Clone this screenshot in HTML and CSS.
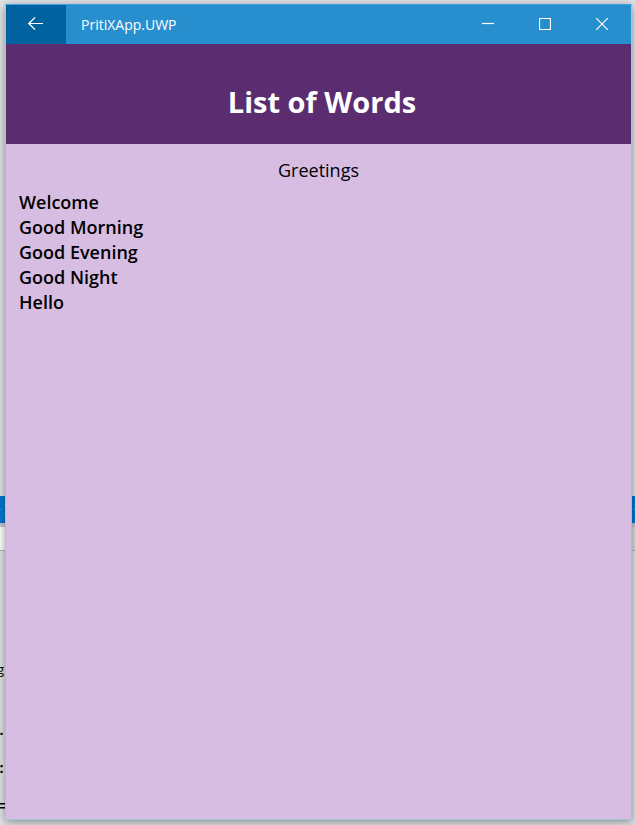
FILE: index.html
```html
<!DOCTYPE html>
<html lang="en">
<head>
<meta charset="utf-8">
<meta name="viewport" content="width=device-width, initial-scale=1">
<title>PritiXApp.UWP</title>
<link rel="stylesheet" href="styles.css">
</head>
<body>
<div class="desktop">
  <div class="backdrop" aria-hidden="true">
    <div class="strip"><span>⁘</span><span>⁘</span></div>
    <div class="toolbar"></div>
    <div class="editor">
      <span class="line line-label">g</span>
      <span class="line">.</span>
      <span class="line">:</span>
      <span class="line">=</span>
    </div>
  </div>
  <div class="window">
    <header class="titlebar">
      <button class="back" type="button" aria-label="Back">
        <svg width="16" height="14" viewBox="0 0 16 14"><path d="M7 .5 .7 6.500 7 12.500M.7 6.500H15"/></svg>
      </button>
      <span class="app-name">PritiXApp.UWP</span>
      <div class="controls">
        <button class="control" type="button" aria-label="Minimize">
          <svg width="12" height="12" viewBox="0 0 12 12"><path d="M0 5.500h12"/></svg>
        </button>
        <button class="control" type="button" aria-label="Maximize">
          <svg width="12" height="12" viewBox="0 0 12 12"><path d="M.5 .5h11v11H.5z"/></svg>
        </button>
        <button class="control" type="button" aria-label="Close">
          <svg width="12" height="12" viewBox="0 0 12 12"><path d="m0 0 12 12M12 0 0 12"/></svg>
        </button>
      </div>
    </header>
    <h1 class="page-title">List of Words</h1>
    <main class="content">
      <h2 class="group">Greetings</h2>
      <ul class="words">
        <li>Welcome</li>
        <li>Good Morning</li>
        <li>Good Evening</li>
        <li>Good Night</li>
        <li>Hello</li>
      </ul>
    </main>
  </div>
</div>
</body>
</html>
```

FILE: styles.css
```css
* {
  box-sizing: border-box;
}

body {
  margin: 0;
  font-family: "Open Sans", "Noto Sans", sans-serif;
  color: #000;
}

.desktop {
  display: grid;
  min-height: 100vh;
  background: #e2e3e6;
  overflow: hidden;
}

.backdrop,
.window {
  grid-area: 1 / 1;
}

.backdrop {
  padding-top: 496px;
}

.strip {
  display: flex;
  justify-content: space-between;
  height: 27px;
  background: #0078cc;
  color: #4aa0dc;
  font-size: 12px;
  line-height: 27px;
}

.toolbar {
  height: 28px;
  border-top: 4px solid #c8c9d2;
  border-bottom: 1px solid #b4b5c2;
  background: linear-gradient(90deg, #fff 50%, #dcdde0 50%);
}

.editor {
  display: flex;
  flex-direction: column;
  gap: 4px;
  padding-top: 108px;
  font-family: "Liberation Mono", monospace;
  font-size: 15px;
  line-height: 34px;
}

.line {
  margin-left: -3px;
  font-weight: 700;
}

.line-label {
  margin-bottom: 32px;
  font-family: "Open Sans", sans-serif;
  font-size: 13px;
  font-weight: 400;
  line-height: 20px;
}

.window {
  z-index: 1;
  display: flex;
  flex-direction: column;
  margin: 4px 3px 5px 5px;
  border: 1px solid #a3c5dc;
  border-top-color: #3ba0e4;
  background: #d7bde2;
  box-shadow: 0 2px 9px rgb(0 0 0 / 40%);
}

.titlebar {
  display: flex;
  align-items: stretch;
  height: 39px;
  background: #288fce;
  color: #fff;
}

.titlebar button {
  display: flex;
  align-items: center;
  justify-content: center;
  padding: 0;
  border: 0;
  background: none;
  color: inherit;
}

.titlebar svg {
  fill: none;
  stroke: currentColor;
  stroke-width: 1.2;
}

.titlebar .back {
  width: 60px;
  padding-bottom: 1px;
  background: #00639f;
}

.controls {
  display: flex;
  padding: 0 1px 1px 0;
}

.titlebar .control {
  width: 57px;
}

.app-name {
  flex: 1;
  padding-left: 15px;
  font-size: 14px;
  line-height: 39px;
}

.page-title {
  margin: 0;
  padding: 38px 0 22px 7px;
  background: #5b2c6f;
  color: #fff;
  font-size: 29px;
  font-weight: 700;
  line-height: 40px;
  text-align: center;
}

.content {
  padding: 14px 13px;
}

.group {
  margin: 0;
  font-size: 18px;
  font-weight: 400;
  line-height: 25px;
  text-align: center;
}

.words {
  margin: 7px 0 0;
  padding: 0;
  list-style: none;
  font-size: 18px;
  font-weight: 600;
  line-height: 25px;
}
```
